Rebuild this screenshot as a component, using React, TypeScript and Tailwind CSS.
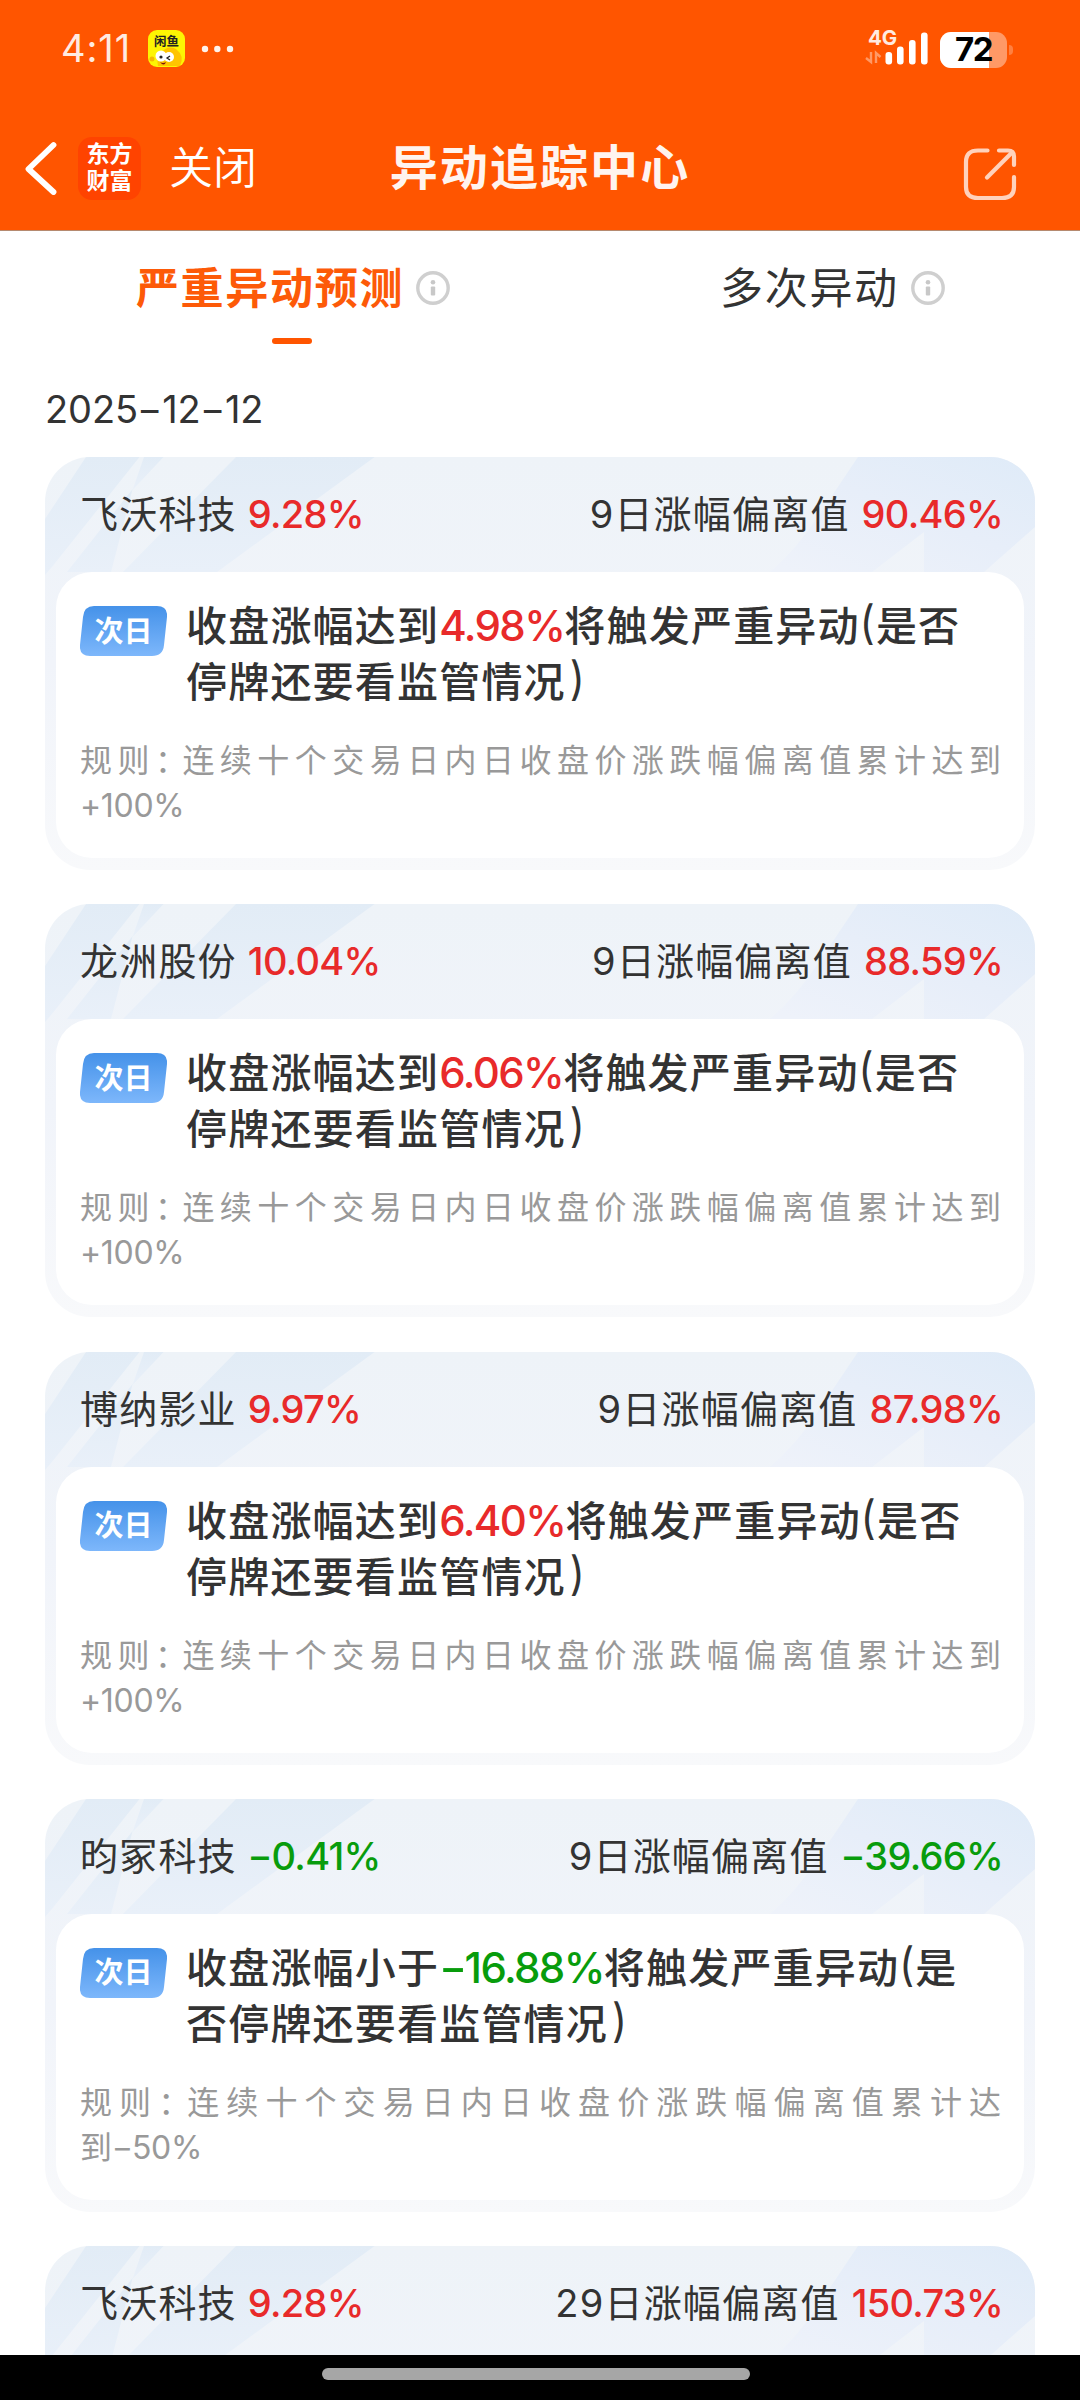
import React from "react";

type Prediction = {
  verb: string;
  trigger: string;
  first: string;
  second: string;
  rule: string;
  ruleEnd: string;
};

type Alert = {
  name: string;
  change: string;
  days: string;
  deviation: string;
  up: boolean;
  prediction?: Prediction;
};

const RULE = "连续十个交易日内日收盘价涨跌幅偏离值累计达";

const rising = (trigger: string): Prediction => ({
  verb: "收盘涨幅达到",
  trigger,
  first: "将触发严重异动(是否",
  second: "停牌还要看监管情况)",
  rule: RULE + "到",
  ruleEnd: "+100%",
});

const alerts: Alert[] = [
  { name: "飞沃科技", change: "9.28%", days: "9", deviation: "90.46%", up: true, prediction: rising("4.98%") },
  { name: "龙洲股份", change: "10.04%", days: "9", deviation: "88.59%", up: true, prediction: rising("6.06%") },
  { name: "博纳影业", change: "9.97%", days: "9", deviation: "87.98%", up: true, prediction: rising("6.40%") },
  {
    name: "昀冢科技",
    change: "-0.41%",
    days: "9",
    deviation: "-39.66%",
    up: false,
    prediction: {
      verb: "收盘涨幅小于",
      trigger: "-16.88%",
      first: "将触发严重异动(是",
      second: "否停牌还要看监管情况)",
      rule: RULE,
      ruleEnd: "到-50%",
    },
  },
  { name: "飞沃科技", change: "9.28%", days: "29", deviation: "150.73%", up: true },
];

/* Splits out hyphens so that they are drawn wide and at digit mid-height. */
function Num({ children }: { children: string }) {
  return (
    <>
      {children.split(/(-)/).map((part, i) =>
        part === "-" ? (
          <span key={i} className="mx-[0.09em] inline-block origin-center scale-x-[1.45]">
            -
          </span>
        ) : (
          part
        ),
      )}
    </>
  );
}

/* Draws parentheses thinner and taller than the surrounding text. */
function Sentence({ children }: { children: string }) {
  return (
    <>
      {children.split(/([()])/).map((part, i) => {
        if (part === "(")
          return (
            <span key={i} className="inline-block origin-bottom scale-y-[1.12] font-normal">
              (
            </span>
          );
        if (part === ")")
          return (
            <span key={i} className="ml-[4px] inline-block origin-bottom scale-y-[1.12] font-normal">
              )
            </span>
          );
        return part;
      })}
    </>
  );
}

function InfoIcon() {
  return (
    <svg viewBox="0 0 34 34" className="h-[34px] w-[34px] shrink-0">
      <circle cx="17" cy="17" r="15.2" fill="none" stroke="#cfcfcf" strokeWidth="3.4" />
      <circle cx="17" cy="11.3" r="2.3" fill="#c8c8c8" />
      <rect x="14.8" y="15.5" width="4.4" height="9" rx="1" fill="#c8c8c8" />
    </svg>
  );
}

function CardBackdrop() {
  return (
    <svg viewBox="0 0 990 160" className="absolute left-0 top-0 h-[160px] w-[990px]">
      <defs>
        <linearGradient id="leftBand" x1="0" y1="0" x2="0" y2="1">
          <stop offset="0" stopColor="#e2ecf6" />
          <stop offset="1" stopColor="#e9f0f9" />
        </linearGradient>
        <linearGradient id="rightBand" x1="1" y1="0" x2="0.1" y2="1">
          <stop offset="0" stopColor="#dfebf8" />
          <stop offset="0.5" stopColor="#e7eef9" />
          <stop offset="1" stopColor="#eef2fa" />
        </linearGradient>
      </defs>
      <g fill="url(#leftBand)">
        <path d="M41 0H94.5L8.5 108L0 118V62Z" />
        <path d="M99 0H118.5L87.6 33Z" />
        <path d="M87.6 32L66 115H22Z" />
        <path d="M191 0H329.6L172 115H78Z" />
      </g>
      <path d="M813 0H990V70L939 115H879V75L827 115H725Q752 92 774 58Z" fill="url(#rightBand)" />
    </svg>
  );
}

function NextDayBadge() {
  return (
    <div className="relative mt-[8px] flex h-[50px] w-[87px] shrink-0 items-center justify-center">
      <svg viewBox="0 0 87 50" className="absolute inset-0 h-full w-full">
        <defs>
          <linearGradient id="badge" x1="0" y1="0" x2="0" y2="1">
            <stop offset="0" stopColor="#4592e9" />
            <stop offset="1" stopColor="#7db7fb" />
          </linearGradient>
        </defs>
        <path
          d="M14 0H77Q88 0 87 11L84 39Q83 50 72 50H10Q-1 50 0 39L3 11Q4 0 14 0Z"
          fill="url(#badge)"
        />
      </svg>
      <span className="relative text-[29px] font-bold leading-none text-white">次日</span>
    </div>
  );
}

function AlertCard({ a }: { a: Alert }) {
  const tone = a.up ? "text-[#e82a2a]" : "text-[#089c0c]";
  const p = a.prediction;
  return (
    <section className="relative h-[413px] shrink-0 overflow-hidden rounded-[45px] bg-linear-to-b from-[#eef3f8] via-[#f1f4fa] to-[#f8f9fb] px-[11px] pb-[12px]">
      <CardBackdrop />
      <header className="relative flex h-[115px] items-center justify-between pl-[24px] pr-[21px] text-[38px] text-[#333]">
        <p className="flex items-center whitespace-nowrap">
          <span className="tracking-[1.2px]">{a.name}</span>
          <span className={`ml-[11px] font-medium tracking-[-0.7px] ${tone}`}>
            <Num>{a.change}</Num>
          </span>
        </p>
        <p className="flex items-center whitespace-nowrap">
          <span className="tracking-[1.2px]">{a.days}日涨幅偏离值</span>
          <span className={`ml-[12px] font-medium tracking-[-0.7px] ${tone}`}>
            <Num>{a.deviation}</Num>
          </span>
        </p>
      </header>
      {p && (
        <div className="relative h-[286px] rounded-[36px] bg-white px-[24px] pt-[26px]">
          <div className="flex gap-[19px]">
            <NextDayBadge />
            <p className="whitespace-nowrap text-[41px] font-medium leading-[56px] tracking-[1.2px] text-[#333]">
              {p.verb}
              <span className={`text-[42px] tracking-[-1.6px] ${tone}`}>
                <Num>{p.trigger}</Num>
              </span>
              <Sentence>{p.first}</Sentence>
              <br />
              <Sentence>{p.second}</Sentence>
            </p>
          </div>
          <div className="mt-[28px] w-[921px] text-[32px] leading-[45px] text-[#999]">
            <p className="whitespace-nowrap [text-align-last:justify]">
              规则<span className="mr-[6px] [font-feature-settings:'halt']">：</span>
              {p.rule}
            </p>
            <p className="tracking-[-0.3px]">
              <Num>{p.ruleEnd}</Num>
            </p>
          </div>
        </div>
      )}
    </section>
  );
}

function StatusBar() {
  return (
    <div className="flex h-[97px] items-center justify-between pl-[61px] pr-[67px]">
      <div className="flex items-center text-[#ffebe1]">
        <span className="-mt-[2px] w-[87px] text-[38px] leading-none tracking-[0.9px]">4:11</span>
        <svg viewBox="0 0 37 37" className="h-[37px] w-[37px]">
          <rect width="37" height="37" rx="9" fill="#fdf503" />
          <path d="M14 22Q20 15 28 19Q37 26 32 36H10Q8 27 14 22Z" fill="#ffc400" />
          <circle cx="4" cy="29" r="2.5" fill="#f5b800" />
          <text x="18.5" y="16" textAnchor="middle" fontSize="12.5" fontWeight="700" fill="#222">
            闲鱼
          </text>
          <circle cx="13" cy="26" r="5.5" fill="#fff" />
          <circle cx="21" cy="27" r="5" fill="#fff" />
          <circle cx="13" cy="27" r="1.6" fill="#222" />
          <path d="M22 26L19 28L22 30" fill="none" stroke="#222" strokeWidth="1.3" />
          <path d="M12 32Q15 34 18 32Q16 37 12 32Z" fill="#7d1010" />
        </svg>
        <svg viewBox="0 0 34 8" className="ml-[16px] h-[8px] w-[34px]" fill="#fff3ec">
          <circle cx="4" cy="4" r="3.2" />
          <circle cx="16.3" cy="4" r="3.2" />
          <circle cx="29" cy="4" r="3.2" />
        </svg>
      </div>
      <div className="flex items-center">
        <svg viewBox="0 0 66 40" className="h-[40px] w-[66px] overflow-visible">
          <text x="3" y="16" fontSize="20.5" fontWeight="700" fill="#ffebe1">
            4G
          </text>
          <g fill="none" stroke="#ff9966" strokeWidth="2.4">
            <path d="M6 23V33L1 29" />
            <path d="M11 34V24L15.5 28" />
          </g>
          <g fill="#fff">
            <rect x="20.5" y="23" width="6.6" height="12.5" rx="3" />
            <rect x="32" y="17.5" width="6.6" height="18" rx="3" />
            <rect x="44" y="11" width="6.6" height="24.5" rx="3" />
            <rect x="56" y="3.5" width="6.6" height="32" rx="3" />
          </g>
        </svg>
        <div className="relative ml-[9px] mt-[2px] flex h-[36px] w-[67px] items-center justify-center rounded-[11px] bg-[#ff9966]">
          <div className="absolute inset-y-0 left-0 w-[49px] rounded-l-[11px] bg-white" />
          <span className="relative text-[33px] font-bold leading-none tracking-[-1.5px] text-black">72</span>
        </div>
        <div className="ml-[2px] mt-[2px] h-[10px] w-[4px] rounded-r-full bg-[#ff8040]" />
      </div>
    </div>
  );
}

function NavBar() {
  return (
    <div className="grid h-[133px] grid-cols-3 items-center px-[24px] pt-[9px]">
      <div className="flex items-center">
        <svg viewBox="0 0 34 54" className="h-[54px] w-[34px]">
          <path
            d="M29.5 4L4.5 28L29.5 51"
            fill="none"
            stroke="#fff"
            strokeWidth="5.8"
            strokeLinecap="round"
            strokeLinejoin="round"
          />
        </svg>
        <div className="ml-[20px] flex h-[63px] w-[63px] flex-col items-center justify-center rounded-[14px] bg-[#ff4300] text-[23px] font-bold leading-[27px] text-white">
          <span>东方</span>
          <span>财富</span>
        </div>
        <span className="ml-[28px] text-[44px] font-[350] leading-none text-white">关闭</span>
      </div>
      <h1 className="whitespace-nowrap text-center text-[48px] font-bold leading-none tracking-[2.1px] text-[#fff4ef]">
        异动追踪中心
      </h1>
      <svg viewBox="0 0 54 54" className="mr-[39px] mt-[12px] h-[54px] w-[54px] justify-self-end">
        <g
          fill="none"
          stroke="#ffd2bc"
          strokeWidth="4.2"
          strokeLinecap="round"
          strokeLinejoin="round"
        >
          <path d="M24.5 3.5H15Q3 3.5 3 15V40Q3 51 15 51H39Q51 51 51 40V30" />
          <path d="M36 3.5H45Q51 3.5 51 9.5V18" />
          <path d="M24 30.5L49 5.5" />
        </g>
      </svg>
    </div>
  );
}

export default function App() {
  return (
    <div className="flex h-[2400px] w-[1080px] flex-col overflow-hidden bg-white font-['Inter','Noto_Sans_CJK_SC',sans-serif]">
      <div className="h-[231px] shrink-0 border-b border-[#b58a70] bg-[#ff5500]">
        <StatusBar />
        <NavBar />
      </div>

      <nav className="flex h-[127px] shrink-0">
        <div className="w-[586px] pt-[29px]">
          <div className="flex items-center justify-center gap-[12px]">
            <span className="text-[43px] font-bold leading-[56px] tracking-[1.7px] text-[#fd5a08]">
              严重异动预测
            </span>
            <InfoIcon />
          </div>
          <div className="ml-[272px] mt-[22px] h-[6px] w-[40px] rounded-full bg-[#ff5500]" />
        </div>
        <div className="flex-1 pl-[134px] pt-[29px]">
          <div className="flex items-center gap-[12px]">
            <span className="text-[43px] leading-[56px] tracking-[1.7px] text-[#333]">多次异动</span>
            <InfoIcon />
          </div>
        </div>
      </nav>

      <main className="flex min-h-0 flex-1 flex-col overflow-hidden px-[45px]">
        <p className="h-[99px] shrink-0 pt-[27px] text-[38px] leading-[48px] tracking-[-0.1px] text-[#333]">
          <Num>2025-12-12</Num>
        </p>
        <div className="flex flex-col gap-[34.25px]">
          {alerts.map((a, i) => (
            <AlertCard key={i} a={a} />
          ))}
        </div>
      </main>

      <footer className="flex h-[45px] shrink-0 justify-center bg-black pr-[8px] pt-[13px]">
        <div className="h-[12px] w-[428px] rounded-full bg-[#a6a6a6]" />
      </footer>
    </div>
  );
}
